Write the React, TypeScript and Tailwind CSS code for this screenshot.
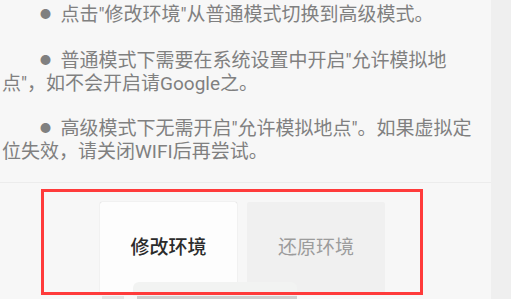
export default function App() {
  const font = { fontFamily: 'Roboto, "Noto Sans CJK SC", sans-serif' };
  return (
    <div className="relative w-[511px] h-[299px] overflow-hidden bg-[#efefef] flex" style={font}>
      <div className="w-[491px] h-full bg-[#f7f7f7] flex flex-col">
        {/* tips */}
        <div className="pl-[2px] pt-[3px] pb-[19px] text-[19px] leading-[23px] text-[#808080] whitespace-nowrap border-b border-[#ececec]">
          <p>
            <span className="pl-[38px] text-[11px] align-[3px]">●</span>&nbsp; 点击"修改环境"从普通模式切换到高级模式。
          </p>
          <p className="mt-[23px]">
            <span className="pl-[38px] text-[11px] align-[3px]">●</span>&nbsp; 普通模式下需要在系统设置中开启"允许模拟地
            <br />
            点"，如不会开启请Google之。
          </p>
          <p className="mt-[22px]">
            <span className="pl-[38px] text-[11px] align-[3px]">●</span>&nbsp; 高级模式下无需开启"允许模拟地点"。如果虚拟定
            <br />
            位失效，请关闭WIFI后再尝试。
          </p>
        </div>
        {/* actions */}
        <div className="flex gap-[10px] pl-[100px] pt-[19px]">
          <button className="w-[137px] h-[92px] bg-[#fdfdfd] rounded-[2px] shadow-[0_0_1px_rgba(0,0,0,0.25)] text-[19px] font-medium text-[#2b2b2b] flex items-center justify-center">
            修改环境
          </button>
          <button className="w-[138px] h-[92px] bg-[#f0f0f0] rounded-[2px] text-[19px] text-[#9c9c9c] flex items-center justify-center">
            还原环境
          </button>
        </div>
      </div>
      {/* faint toast overlay */}
      <div className="absolute left-[133px] top-[282px] w-[164px] h-[14px] bg-[#f2f3f2] rounded-t-[6px]" />
      <div className="absolute left-[102px] top-[296px] w-[22px] h-[3px] bg-[#e4e4e4]" />
      <div className="absolute left-[137px] top-[296px] w-[160px] h-[3px] bg-[#cfcfcf]" />
      {/* highlight box */}
      <div className="absolute left-[41px] top-[189px] w-[382px] h-[106px] border-[3px] border-[#ff3b3b]" />
    </div>
  );
}
